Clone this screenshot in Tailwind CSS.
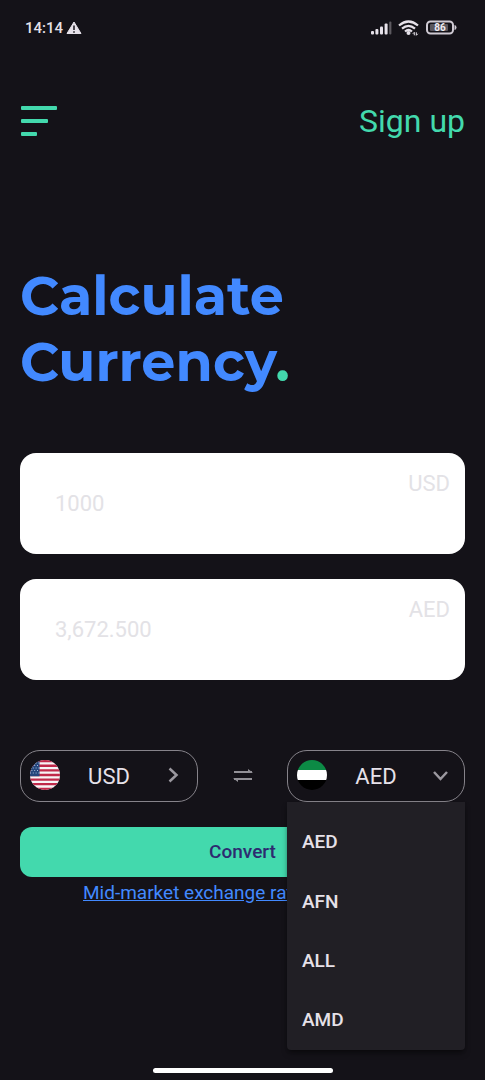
<!DOCTYPE html>
<html lang="en">
<head>
<meta charset="utf-8">
<meta name="viewport" content="width=device-width, initial-scale=1">
<title>Calculate Currency</title>
<script src="https://cdn.jsdelivr.net/npm/@tailwindcss/browser@4"></script>
</head>
<body class="flex min-h-screen flex-col bg-[#141218] font-['Roboto',sans-serif] text-[#e6e1e9]">
  <div class="flex h-14 items-center justify-between pr-7 pl-[25px]">
    <div class="flex items-center gap-[3px]">
      <span class="text-[15px] font-medium">14:14</span>
      <svg class="h-4 w-4" viewBox="0 0 16 16" aria-hidden="true"><path d="M8 2 15 13.500H1Z" fill="#e6e1e9" stroke="#e6e1e9" stroke-linejoin="round"/><path d="M8 5.500v4.500M8 11.200v1.600" stroke="#141218" stroke-width="1.500"/></svg>
    </div>
    <div class="flex items-center gap-[6px]">
      <svg class="h-[14px] w-[22px]" viewBox="0 0 22 14" aria-hidden="true"><g fill="#e6e1e9"><rect x="1" y="10" width="3" height="3.500" rx="1"/><rect x="5.400" y="8" width="3" height="5.500" rx="1"/><rect x="10" y="5.500" width="3" height="8" rx="1"/><rect x="14.600" y="2.500" width="3" height="11" rx="1"/><rect x="19.200" y="0.500" width="2.200" height="13" rx="1" opacity=".35"/></g></svg>
      <svg class="h-4 w-[22px]" viewBox="0 0 22 16" aria-hidden="true"><g fill="none" stroke="#e6e1e9" stroke-width="2.200"><path d="M1 5.500Q10.500-2.500 20 5.500"/><path d="M4 8.700Q10.500 3 17 8.700"/><path d="M7 11.500Q10.500 8.500 14 11.500"/></g><circle cx="10.500" cy="13" r="2" fill="#e6e1e9"/><path d="M14.800 13.800 16.300 12.300v3M18.300 12.300v3l1.500-1.500" fill="none" stroke="#e6e1e9" stroke-width="1"/></svg>
      <svg class="h-4 w-[31px]" viewBox="0 0 31 16" aria-hidden="true"><rect x="1" y="1.500" width="26" height="12" rx="3.500" fill="none" stroke="#cfcad3" stroke-width="2"/><rect x="4" y="4" width="18" height="7" rx="1" fill="#59565d"/><path d="M28.500 5q2 .3 2 2.500t-2 2.500z" fill="#cfcad3"/><text x="14" y="11" text-anchor="middle" font-size="10" font-weight="700" fill="#f0ecf3">86</text></svg>
    </div>
  </div>

  <header class="flex h-[130px] items-center justify-between px-5">
    <button type="button" aria-label="Menu">
      <svg class="h-8 w-[37px]" viewBox="0 0 37 32" aria-hidden="true"><g fill="#43d9ad"><rect x="1" y="1" width="36" height="4" rx="1"/><rect x="1" y="14" width="27" height="4" rx="1"/><rect x="1" y="27" width="16" height="4" rx="1"/></g></svg>
    </button>
    <a href="#signup" class="text-[32px] leading-10 text-[#43d9ad]">Sign up</a>
  </header>

  <main class="flex flex-col px-5 pt-[77px]">
    <h1 class="font-['Montserrat','Inter',sans-serif] text-[54px] leading-[66px] font-bold text-[#4289ff]">Calculate<br>Currency<span class="text-[#43d9ad]">.</span></h1>

    <form class="mt-[58px] flex flex-col">
      <div class="flex flex-col gap-[25px] text-[22px]">
        <div class="relative">
          <input id="from" type="text" placeholder="1000" class="block h-[101px] w-full rounded-2xl bg-white pr-20 pl-[35px] text-gray-700 placeholder:text-[#e3e2e6]">
          <label for="from" class="absolute top-4 right-[15px] leading-[30px] text-[#e3e2e6]">USD</label>
        </div>
        <div class="relative">
          <input id="to" type="text" placeholder="3,672.500" class="block h-[101px] w-full rounded-2xl bg-white pr-20 pl-[35px] text-gray-700 placeholder:text-[#e3e2e6]">
          <label for="to" class="absolute top-4 right-[15px] leading-[30px] text-[#e3e2e6]">AED</label>
        </div>
      </div>

      <div class="mt-[70px] flex items-center">
        <div class="flex-1">
          <button type="button" aria-haspopup="listbox" aria-expanded="false" class="flex h-[52px] w-full items-center rounded-[20px] border border-[#86838a] pr-3 pl-2 text-[22px]">
            <svg class="h-8 w-8" viewBox="0 0 32 32" aria-hidden="true"><clipPath id="c1"><circle cx="16" cy="15" r="15"/></clipPath><g clip-path="url(#c1)"><path fill="#f7f4f6" d="M0 0h32v32H0z"/><path stroke="#c0294a" stroke-width="2.310" d="M0 1.150h32M0 5.770h32M0 10.380h32M0 15h32M0 19.600h32M0 24.200h32M0 28.850h32"/><path fill="#24467c" d="M0 0h10.500v16.200H0z"/><path stroke="#a9bbd6" stroke-width="1" stroke-dasharray="1 1.800" d="M1 3h9M2.400 5.500h8M1 8h9M2.400 10.500h8M1 13h9"/></g></svg>
            <span class="flex-1 pr-1 text-center">USD</span>
            <svg class="h-6 w-6" viewBox="0 0 24 24" fill="none" stroke="#9b989f" stroke-width="2.500" aria-hidden="true"><path d="m8.500 4.500 7 6.500-7 6.500"/></svg>
          </button>
        </div>
        <button type="button" aria-label="Swap currencies" class="flex w-[89px] justify-center">
          <svg class="h-5 w-5" viewBox="0 0 20 20" aria-hidden="true"><g stroke="#929096" stroke-width="1.800" fill="none"><path d="M1 6h18M1 13h18"/></g><path d="M15 3 20 6.800h-5zM5 16 0 12.200h5z" fill="#929096"/></svg>
        </button>
        <div class="relative flex-1">
          <button type="button" aria-haspopup="listbox" aria-expanded="true" class="flex h-[52px] w-full items-center rounded-[20px] border border-[#86838a] pr-3 pl-2 text-[22px]">
            <svg class="h-8 w-8" viewBox="0 0 32 32" aria-hidden="true"><clipPath id="c2"><circle cx="16" cy="15" r="15"/></clipPath><g clip-path="url(#c2)"><path fill="#0c8a45" d="M0 0h32v10H0z"/><path fill="#fff" d="M0 10h32v10H0z"/><path fill="#000" d="M0 20h32v12H0z"/></g></svg>
            <span class="flex-1 pr-1 text-center">AED</span>
            <svg class="h-6 w-6" viewBox="0 0 24 24" fill="none" stroke="#9b989f" stroke-width="2.500" aria-hidden="true"><path d="m6 8 6.500 7L19 8"/></svg>
          </button>
          <div role="listbox" aria-label="Currency" class="absolute inset-x-0 top-full z-10 flex flex-col rounded-b bg-[#211f25] pt-[11px] text-[19px] font-medium shadow-md shadow-black/40">
            <button type="button" role="option" aria-selected="true" class="h-[59px] px-[15px] text-left">AED</button>
            <button type="button" role="option" aria-selected="false" class="h-[60px] px-[15px] text-left">AFN</button>
            <button type="button" role="option" aria-selected="false" class="h-[59px] px-[15px] text-left">ALL</button>
            <button type="button" role="option" aria-selected="false" class="h-[59px] px-[15px] text-left">AMD</button>
          </div>
        </div>
      </div>

      <button type="submit" class="mt-[25px] h-[50px] rounded-xl bg-[#43d9ad] text-[19px] font-medium text-[#2d2b70]">Convert</button>
      <a href="#rates" class="mt-1 ml-[63px] self-start text-[19px] leading-6 whitespace-nowrap text-[#4289ff] underline">Mid-market exchange rate</a>
    </form>
  </main>

  <div class="mt-auto flex justify-center pb-[7px]"><div class="h-[5px] w-[180px] rounded-full bg-white"></div></div>
</body>
</html>
